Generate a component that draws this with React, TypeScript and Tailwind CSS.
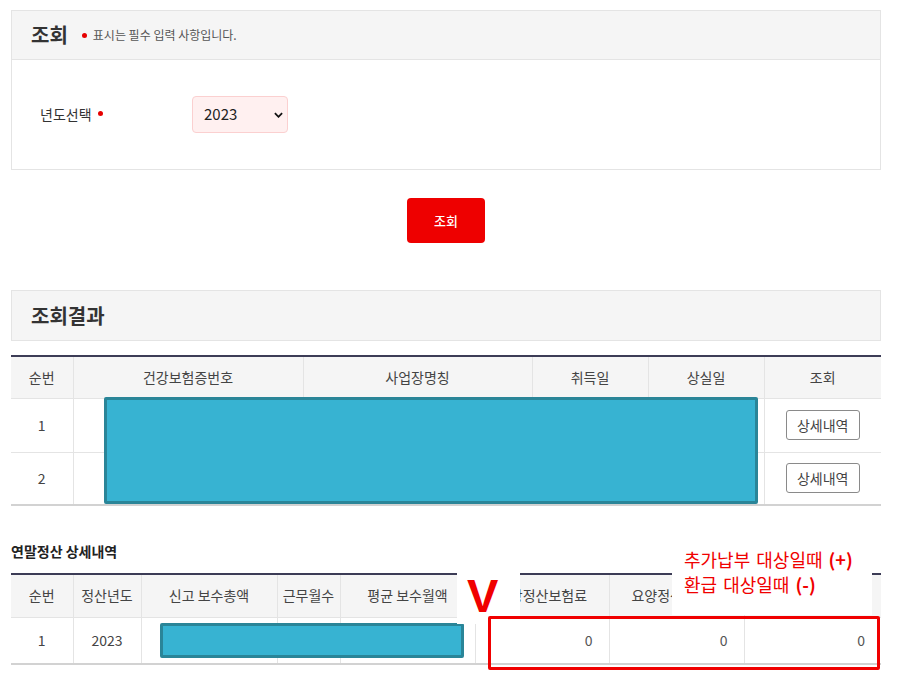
import React from "react"

const FONT = { fontFamily: '"Noto Sans CJK KR", "Noto Sans", sans-serif' }

function RedDot({ className = "" }: { className?: string }) {
  return <span className={`inline-block h-[5px] w-[5px] rounded-full bg-[#e60000] ${className}`} />
}

const listHeads = [
  { label: "순번", w: "w-[62px]" },
  { label: "건강보험증번호", w: "w-[230px]" },
  { label: "사업장명칭", w: "w-[229px]" },
  { label: "취득일", w: "w-[116px]" },
  { label: "상실일", w: "w-[116px]" },
  { label: "조회", w: "w-[117px]" },
]

// the last header sits under the note box in the reference, so it stays empty
const detailHeads = [
  { label: "순번", w: "w-[62px]" },
  { label: "정산년도", w: "w-[68px]" },
  { label: "신고 보수총액", w: "w-[136px]" },
  { label: "근무월수", w: "w-[63px]" },
  { label: "평균 보수월액", w: "w-[135px]" },
  { label: "건강정산보험료", w: "w-[134px]" },
  { label: "요양정산보험료", w: "w-[135px]" },
  { label: "", w: "w-[137px]" },
]

function DetailButton() {
  return (
    <button className="h-[30px] w-[74px] rounded-[3px] border border-[#8a8a8a] bg-white text-[14px] text-[#444]">
      상세내역
    </button>
  )
}

export default function App() {
  return (
    <div className="relative h-[691px] w-[915px] overflow-hidden bg-white text-[#333]" style={FONT}>
      <div className="ml-[11px] w-[870px] pt-[10px]">
        {/* search box */}
        <section className="border border-[#e4e4e4]">
          <div className="flex h-[49px] items-center border-b border-[#e4e4e4] bg-[#f5f5f5] pl-[19px]">
            <h1 className="text-[20px] font-bold text-[#333]">조회</h1>
            <RedDot className="ml-[14px] mr-[6px]" />
            <span className="text-[12px] text-[#555]">표시는 필수 입력 사항입니다.</span>
          </div>
          <div className="flex h-[109px] items-center pl-[28px]">
            <label className="flex w-[152px] items-center text-[14px] text-[#333]">
              년도선택
              <RedDot className="ml-[6px] mb-[2px]" />
            </label>
            <div className="relative">
              <select
                defaultValue="2023"
                className="h-[37px] w-[96px] appearance-none rounded-[4px] border border-[#fbd0d0] bg-[#fff0f0] pl-[11px] text-[15px] text-[#222] outline-none"
              >
                <option>2023</option>
                <option>2022</option>
                <option>2021</option>
              </select>
              <svg
                viewBox="0 0 10 6"
                className="pointer-events-none absolute right-[5px] top-[16px] h-[6px] w-[9px]"
                fill="none"
                stroke="#111"
                strokeWidth="2"
              >
                <path d="M1 1l4 4 4-4" />
              </svg>
            </div>
          </div>
        </section>

        <div className="mt-[28px] flex justify-center">
          <button className="h-[45px] w-[78px] rounded-[4px] bg-[#ee0000] text-[13px] font-medium text-white">
            조회
          </button>
        </div>

        {/* result box */}
        <section className="mt-[47px] flex h-[51px] items-center border border-[#e4e4e4] bg-[#f5f5f5] pl-[19px]">
          <h2 className="text-[20px] font-semibold text-[#333]">조회결과</h2>
        </section>

        <table className="mt-[14px] w-[870px] table-fixed border-collapse border-t-2 border-b-2 border-t-[#3c3c56] border-b-[#d2d2d2] text-[14px]">
          <thead>
            <tr className="h-[42px] bg-[#f5f5f5]">
              {listHeads.map((h, i) => (
                <th
                  key={h.label}
                  className={`${h.w} font-normal text-[#444] ${i > 0 ? "border-l border-[#e4e4e4]" : ""}`}
                >
                  {h.label}
                </th>
              ))}
            </tr>
          </thead>
          <tbody className="text-[#444]">
            {[1, 2].map((n) => (
              <tr key={n} className={`${n === 1 ? "h-[54px]" : "h-[53px]"} border-t border-[#e4e4e4]`}>
                <td className="text-center">{n}</td>
                <td className="border-l border-[#e4e4e4]" />
                <td className="border-l border-[#e4e4e4]" />
                <td className="border-l border-[#e4e4e4]" />
                <td className="border-l border-[#e4e4e4]" />
                <td className="border-l border-[#e4e4e4] text-center">
                  <DetailButton />
                </td>
              </tr>
            ))}
          </tbody>
        </table>

        <h3 className="mt-[35px] text-[14px] font-semibold text-[#222]">연말정산 상세내역</h3>

        <table className="mt-[11px] w-[870px] table-fixed border-collapse border-t-2 border-b-2 border-t-[#3c3c56] border-b-[#d2d2d2] text-[14px]">
          <thead>
            <tr className="h-[43px] bg-[#f5f5f5]">
              {detailHeads.map((h, i) => (
                <th
                  key={i}
                  className={`${h.w} font-normal text-[#444] ${i > 0 ? "border-l border-[#e4e4e4]" : ""}`}
                >
                  {h.label}
                </th>
              ))}
            </tr>
          </thead>
          <tbody className="text-[#444]">
            <tr className="h-[47px] border-t border-[#e4e4e4]">
              <td className="text-center">1</td>
              <td className="border-l border-[#e4e4e4] text-center">2023</td>
              <td className="border-l border-[#e4e4e4]" />
              <td className="border-l border-[#e4e4e4]" />
              <td className="border-l border-[#e4e4e4]" />
              <td className="border-l border-[#e4e4e4] pr-[16px] text-right text-[#555]">0</td>
              <td className="border-l border-[#e4e4e4] pr-[16px] text-right text-[#555]">0</td>
              <td className="border-l border-[#e4e4e4] pr-[16px] text-right text-[#555]">0</td>
            </tr>
          </tbody>
        </table>
      </div>

      {/* redaction blocks */}
      <div className="absolute left-[104px] top-[397px] h-[107px] w-[654px] rounded-[2px] border-[3px] border-[#2a8598] bg-[#37b3d2]" />
      <div className="absolute left-[160px] top-[623px] h-[35px] w-[304px] rounded-[2px] border-[3px] border-[#2a8598] bg-[#37b3d2]" />

      {/* annotation: V mark */}
      <div className="absolute left-[457px] top-[562px] h-[62px] w-[63px] bg-white" />
      <div
        className="absolute left-[467px] top-[572px] text-[47px] font-bold leading-none text-[#f00000]"
        style={{ fontFamily: '"Liberation Sans", Arial, sans-serif' }}
      >
        V
      </div>

      {/* annotation: note */}
      <div className="absolute left-[672px] top-[540px] h-[75px] w-[200px] bg-white" />
      <div className="absolute left-[684px] top-[547px] text-[18px] leading-[25px] text-[#f00000] [word-spacing:2px]">
        <div>
          추가납부 대상일때 <span className="font-bold">(+)</span>
        </div>
        <div>
          환급 대상일때 <span className="font-bold">(-)</span>
        </div>
      </div>

      {/* annotation: red frame */}
      <div className="absolute left-[488px] top-[616px] h-[54px] w-[392px] rounded-[2px] border-[3px] border-[#f00000]" />
    </div>
  )
}
